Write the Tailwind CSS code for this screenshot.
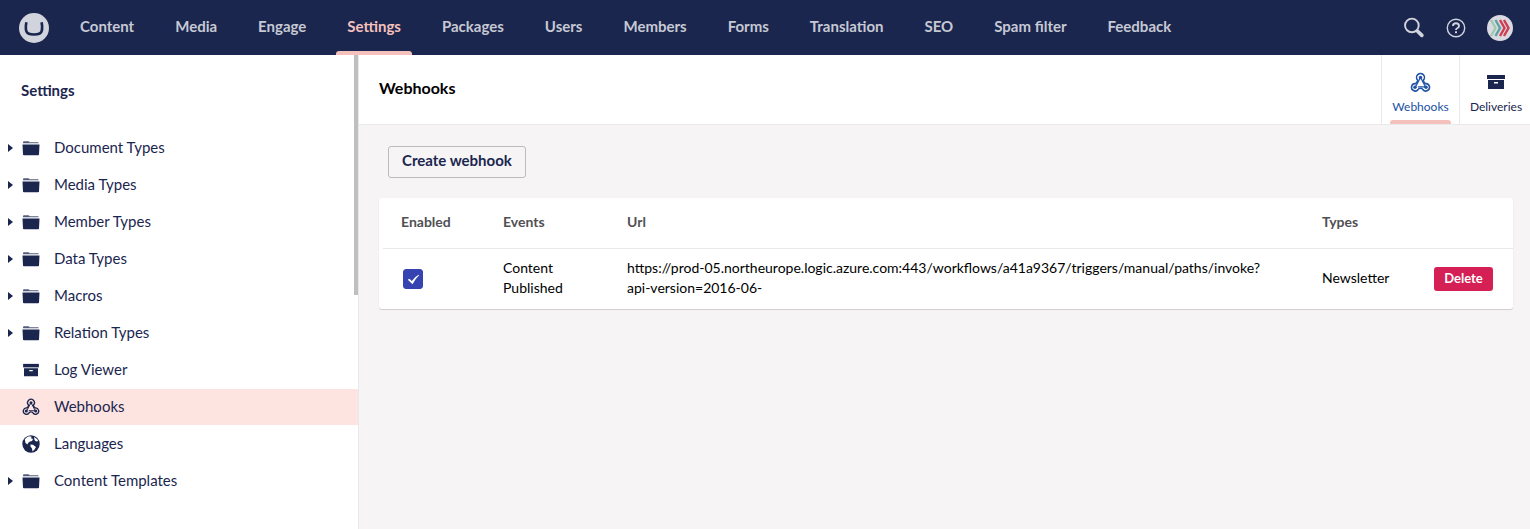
<!DOCTYPE html>
<html lang="en">
<head>
  <meta charset="UTF-8" />
  <meta name="viewport" content="width=device-width, initial-scale=1" />
  <title>Webhooks - Settings</title>
  <script src="https://cdn.jsdelivr.net/npm/@tailwindcss/browser@4"></script>
</head>
<body class="h-screen flex flex-col overflow-hidden bg-[#f6f4f5] font-['Lato',sans-serif] text-[15px] text-[#1b264f]">

  <!-- Shared icons -->
  <svg class="hidden">
    <symbol id="folder" viewBox="0 0 18 16">
      <path d="M1 3.200V2.400Q1 1.200 2 1.200h4.500Q7 1.200 7.500 2.200H16.500V3.200Z" opacity=".75" />
      <path d="M.5 4.500h17L17 14.500Q17 15.300 16 15.300H2Q1 15.300 1 14.500Z" />
    </symbol>
    <symbol id="box" viewBox="0 0 18 16">
      <path d="M0 1h18v4H0Z" />
      <path fill-rule="evenodd" d="M1 6h16v9H1ZM7 8v1.500h4V8Z" />
    </symbol>
    <symbol id="webhook" viewBox="0 0 24 24">
      <g fill="none" stroke="currentColor" stroke-width="1.800" stroke-linecap="round">
        <path d="M8.700 9.300A4.500 4.500 0 1 1 15.300 9.300Q15 10.500 16 11.500L17.500 13.300A4.200 4.200 0 1 1 14.700 20Q14 18.500 12 18.500T9.300 20A4.200 4.200 0 1 1 6.500 13.300L8 11.500Q9 10.500 8.700 9.300Z" />
        <path d="M12 6 9.500 11 6.200 17M12 6l2.500 5 3.300 6M9.500 17H18" stroke-width="1.300" />
      </g>
      <circle cx="12" cy="6.300" r="2" /><circle cx="5.700" cy="17.300" r="2" /><circle cx="18.300" cy="17.300" r="2" />
    </symbol>
    <symbol id="globe" viewBox="0 0 18 18">
      <circle cx="9" cy="9" r="8.700" />
      <path fill="#fff" d="M2.800 4.200 5.500 1.800 8 1.200 10 2 8.500 3 11 4 10 6 8 6.500 6 8 5.500 9.500 3.500 8ZM12 2 15 4 16.200 6 14 6.500 12.500 5ZM8.500 9.500 11 9.700 14 12 12.500 14.500 10.500 16.500 10 13.500 8.500 11.500Z" />
    </symbol>
  </svg>

  <header class="h-[55px] shrink-0 flex items-center bg-[#1b264f] pl-[19px] pr-[17px]">
    <a href="#" aria-label="Home" class="mr-5 shrink-0">
      <svg class="size-[30px]" viewBox="0 0 30 30">
        <circle cx="15" cy="15" r="15" fill="#d1d4dc" />
        <path d="M7.400 9.200Q6.300 15 7.300 18Q8 21.500 15 21.500T22.700 18Q23.700 15 22.600 9.200" fill="none" stroke="#1b264f" stroke-width="2.600" />
      </svg>
    </a>
    <nav class="h-full flex gap-[19px] font-bold leading-[53px] text-[#c6c9d3]">
      <a href="#" class="px-[11px]">Content</a>
      <a href="#" class="px-[11px]">Media</a>
      <a href="#" class="px-[11px]">Engage</a>
      <a href="#" class="relative px-[11px] text-[#f5c1bc]">Settings
        <span class="absolute inset-x-0 bottom-0 h-1 rounded-t-[3px] bg-[#f5c1bc]"></span>
      </a>
      <a href="#" class="px-[11px]">Packages</a>
      <a href="#" class="px-[11px]">Users</a>
      <a href="#" class="px-[11px]">Members</a>
      <a href="#" class="px-[11px]">Forms</a>
      <a href="#" class="px-[11px]">Translation</a>
      <a href="#" class="px-[11px]">SEO</a>
      <a href="#" class="px-[11px] whitespace-nowrap">Spam filter</a>
      <a href="#" class="px-[11px]">Feedback</a>
    </nav>
    <div class="ml-auto flex items-center gap-[21px] text-[#d1d4dc]">
      <button aria-label="Search">
        <svg class="size-[21px]" viewBox="0 0 20 20" fill="none" stroke="currentColor">
          <circle cx="7.500" cy="8" r="6.500" stroke-width="1.800" />
          <path d="m13 13.500 4 4" stroke-width="3.500" stroke-linecap="round" />
        </svg>
      </button>
      <button aria-label="Help">
        <svg class="size-5" viewBox="0 0 20 20" fill="none" stroke="currentColor">
          <circle cx="10" cy="10" r="8.700" stroke-width="1.400" />
          <path d="M7 8Q7 5.300 10 5.300T13 8Q13 9.300 11.500 10T10 12" stroke-width="1.900" />
          <path d="M10 13.300v2" stroke-width="2" />
        </svg>
      </button>
      <button aria-label="Your profile">
        <svg class="size-[26px]" viewBox="0 0 26 26" fill="none" stroke-width="2.400">
          <circle cx="13" cy="13" r="13" fill="#d9dae2" />
          <path d="m4 5 4.500 8L4 21" stroke="#a3c9ad" />
          <path d="m8.500 5 4.500 8-4.500 8" stroke="#5ba3a3" />
          <path d="m13 5 4.500 8-4.500 8M17 5l4.500 8-4.500 8" stroke="#d23a50" />
        </svg>
      </button>
    </div>
  </header>

  <div class="flex-1 min-h-0 flex">
    <aside class="relative w-[359px] shrink-0 border-r border-[#e9e9eb] bg-white">
      <h2 class="pt-[25px] pl-[21px] leading-5 font-bold">Settings</h2>
      <ul class="mt-[30px] flex flex-col gap-px">
        <li><a href="#" class="flex h-9 items-center pl-2"><svg class="mr-[9px] h-2 w-[5px]" viewBox="0 0 5 8" fill="currentColor"><path d="M0 0 5 4 0 8Z" /></svg><svg class="mr-[14px] h-4 w-[18px]" fill="currentColor"><use href="#folder" /></svg><span class="pb-[2px]">Document Types</span></a></li>
        <li><a href="#" class="flex h-9 items-center pl-2"><svg class="mr-[9px] h-2 w-[5px]" viewBox="0 0 5 8" fill="currentColor"><path d="M0 0 5 4 0 8Z" /></svg><svg class="mr-[14px] h-4 w-[18px]" fill="currentColor"><use href="#folder" /></svg><span class="pb-[2px]">Media Types</span></a></li>
        <li><a href="#" class="flex h-9 items-center pl-2"><svg class="mr-[9px] h-2 w-[5px]" viewBox="0 0 5 8" fill="currentColor"><path d="M0 0 5 4 0 8Z" /></svg><svg class="mr-[14px] h-4 w-[18px]" fill="currentColor"><use href="#folder" /></svg><span class="pb-[2px]">Member Types</span></a></li>
        <li><a href="#" class="flex h-9 items-center pl-2"><svg class="mr-[9px] h-2 w-[5px]" viewBox="0 0 5 8" fill="currentColor"><path d="M0 0 5 4 0 8Z" /></svg><svg class="mr-[14px] h-4 w-[18px]" fill="currentColor"><use href="#folder" /></svg><span class="pb-[2px]">Data Types</span></a></li>
        <li><a href="#" class="flex h-9 items-center pl-2"><svg class="mr-[9px] h-2 w-[5px]" viewBox="0 0 5 8" fill="currentColor"><path d="M0 0 5 4 0 8Z" /></svg><svg class="mr-[14px] h-4 w-[18px]" fill="currentColor"><use href="#folder" /></svg><span class="pb-[2px]">Macros</span></a></li>
        <li><a href="#" class="flex h-9 items-center pl-2"><svg class="mr-[9px] h-2 w-[5px]" viewBox="0 0 5 8" fill="currentColor"><path d="M0 0 5 4 0 8Z" /></svg><svg class="mr-[14px] h-4 w-[18px]" fill="currentColor"><use href="#folder" /></svg><span class="pb-[2px]">Relation Types</span></a></li>
        <li><a href="#" class="flex h-9 items-center pl-[22px]"><svg class="mr-[14px] h-[14px] w-[18px]" fill="currentColor"><use href="#box" /></svg><span class="pb-[2px]">Log Viewer</span></a></li>
        <li><a href="#" class="flex h-9 items-center bg-[#fee4e1] pl-[22px]"><svg class="mr-[14px] size-[18px]" fill="currentColor"><use href="#webhook" /></svg><span class="pb-[2px]">Webhooks</span></a></li>
        <li><a href="#" class="flex h-9 items-center pl-[22px]"><svg class="mr-[14px] size-[18px]" fill="currentColor"><use href="#globe" /></svg><span class="pb-[2px]">Languages</span></a></li>
        <li><a href="#" class="flex h-9 items-center pl-2"><svg class="mr-[9px] h-2 w-[5px]" viewBox="0 0 5 8" fill="currentColor"><path d="M0 0 5 4 0 8Z" /></svg><svg class="mr-[14px] h-4 w-[18px]" fill="currentColor"><use href="#folder" /></svg><span class="pb-[2px]">Content Templates</span></a></li>
      </ul>
      <!-- Scrollbar thumb -->
      <div class="absolute top-0 right-0 h-60 w-1 bg-[#bfbfbf]"></div>
    </aside>

    <main class="flex-1 min-w-0">
      <div class="flex h-[70px] border-b border-[#e9e9eb] bg-white">
        <h1 class="flex-1 pl-5 text-base leading-[66px] font-bold text-black">Webhooks</h1>
        <button class="relative flex w-[78px] flex-col items-center border-l border-[#e9e9eb] pt-[17px] text-xs text-[#2152a3]">
          <svg class="mb-[6px] size-[21px]" fill="currentColor"><use href="#webhook" /></svg>
          Webhooks
          <span class="absolute inset-x-2 bottom-0 h-1 rounded-t-[3px] bg-[#f5c1bc]"></span>
        </button>
        <button class="flex w-[71px] flex-col items-center border-l border-[#e9e9eb] pt-[17px] pl-[2px] text-xs">
          <svg class="mt-[2px] mb-[9px] h-4 w-[18px]" fill="currentColor"><use href="#box" /></svg>
          Deliveries
        </button>
      </div>

      <div class="pt-[21px] pr-[17px] pl-5">
        <button class="ml-[9px] h-8 rounded-[3px] border border-[#bbbabf] px-[13px] pb-1 font-bold">Create webhook</button>

        <div class="mt-5 rounded-[3px] bg-white pl-1 shadow-[0_1px_1px_rgba(0,0,0,0.16)]">
          <table class="w-full text-left text-sm leading-5 text-black">
            <thead class="text-[#515054]">
              <tr class="h-[50px] border-b border-[#e9e9eb]">
                <th class="w-[120px] pb-[2px] pl-[18px]">Enabled</th>
                <th class="w-[124px] pb-[2px]">Events</th>
                <th class="pb-[2px]">Url</th>
                <th class="w-28 pb-[2px]">Types</th>
                <th class="w-[79px]"></th>
              </tr>
            </thead>
            <tbody>
              <tr class="h-[61px]">
                <td class="pl-5">
                  <label class="relative block size-5">
                    <input type="checkbox" checked aria-label="Enabled" class="block size-5 appearance-none rounded-[3px] border border-[#3544b1] checked:bg-[#3544b1]" />
                    <svg class="pointer-events-none absolute inset-0 size-5" viewBox="0 0 20 20" fill="#fff"><path d="m4.800 10.800 1.500-1.100 2.500 2.300Q11.500 8 15.700 5.800L16 6.500Q12 10 9.500 15.200Z" /></svg>
                  </label>
                </td>
                <td class="pb-[2px]">Content<br />Published</td>
                <td class="pr-10 pb-[2px]">https://prod-05.northeurope.logic.azure.com:443/workflows/a41a9367/triggers/manual/paths/invoke?<wbr />api-version=2016-06-</td>
                <td class="pb-[2px]">Newsletter</td>
                <td><button class="block h-6 w-[59px] rounded-[3px] bg-[#d42054] pb-[2px] text-[13px] leading-5 font-bold text-white">Delete</button></td>
              </tr>
            </tbody>
          </table>
        </div>
      </div>
    </main>
  </div>
</body>
</html>
